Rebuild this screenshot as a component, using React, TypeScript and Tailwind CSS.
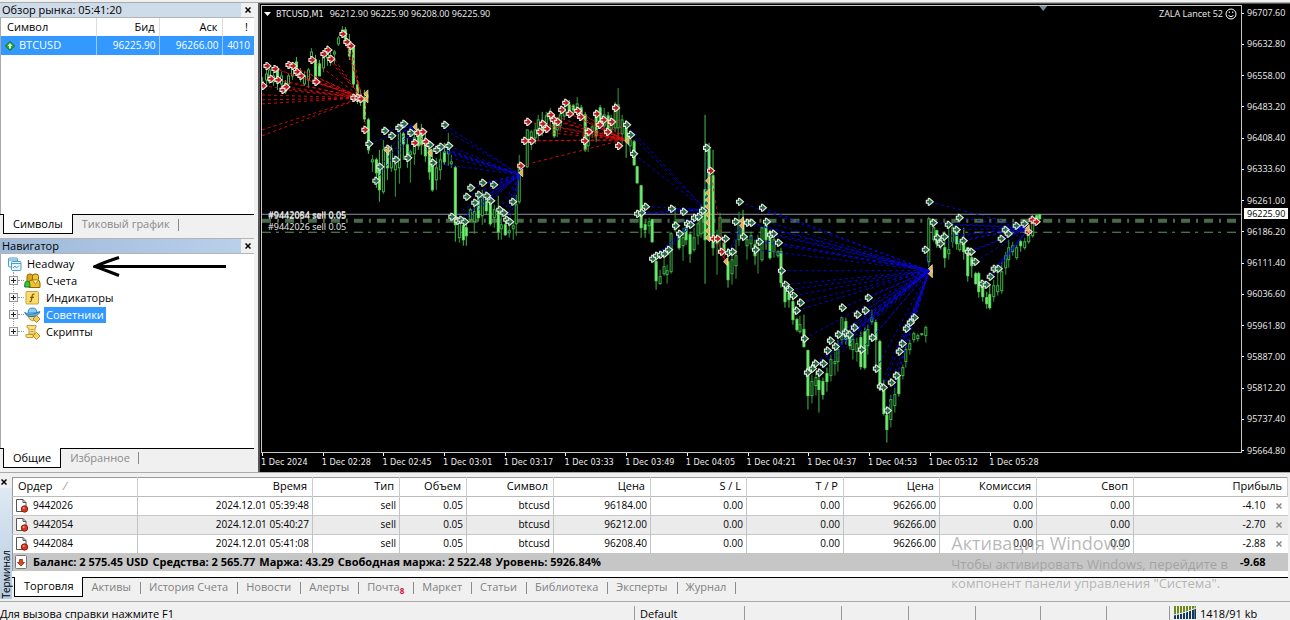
import { ReactNode } from "react"

type Candle = [number, number, number, number, number, 0 | 1] // x, high, low, top, bottom, filled
type Point = [number, number]
type Deals = { target: Point; color: "red" | "blue"; points: Point[]; extra?: Point[] }

const candles: Candle[] = [
  [262, 77, 90, 82, 88, 0], [266, 68, 86, 74, 80, 0], [269, 65, 84, 70, 82, 0], [273, 72, 86, 76, 82, 0],
  [277, 66, 90, 70, 82, 1], [281, 72, 88, 76, 84, 0], [285, 80, 94, 84, 92, 0], [288, 74, 88, 76, 84, 0],
  [292, 62, 80, 66, 76, 0], [296, 57, 76, 62, 70, 1], [300, 68, 82, 72, 78, 0], [304, 72, 86, 76, 84, 0],
  [308, 68, 88, 70, 80, 0], [311, 48, 62, 52, 60, 0], [315, 55, 84, 60, 78, 1], [319, 60, 76, 64, 76, 1],
  [323, 50, 72, 58, 68, 0], [327, 45, 66, 50, 58, 0], [330, 52, 66, 56, 62, 0], [334, 50, 64, 52, 54, 0],
  [338, 36, 46, 38, 44, 0], [342, 26, 38, 30, 36, 0], [345, 27, 46, 30, 42, 1], [349, 34, 60, 42, 56, 1],
  [353, 44, 88, 46, 84, 1], [357, 80, 104, 85, 97, 1], [360, 90, 106, 95, 101, 1], [364, 90, 122, 100, 119, 1],
  [368, 118, 154, 120, 150, 1], [372, 155, 172, 160, 162, 0], [376, 158, 188, 160, 173, 1], [379, 150, 202, 165, 190, 1],
  [383, 140, 194, 150, 192, 0], [387, 148, 180, 150, 168, 1], [391, 145, 172, 150, 168, 0], [395, 158, 197, 165, 170, 0],
  [399, 126, 184, 132, 168, 0], [403, 132, 160, 134, 144, 1], [407, 138, 168, 145, 155, 1], [410, 150, 183, 152, 155, 0],
  [414, 130, 165, 138, 154, 0], [418, 128, 150, 132, 146, 1], [421, 124, 155, 135, 145, 1], [425, 130, 162, 140, 156, 1],
  [429, 145, 180, 150, 172, 1], [432, 150, 192, 160, 190, 1], [436, 158, 190, 168, 180, 0], [440, 150, 180, 160, 170, 0],
  [444, 143, 165, 152, 162, 1], [448, 133, 166, 145, 154, 0], [451, 155, 168, 162, 164, 0], [455, 166, 242, 168, 225, 1],
  [459, 220, 243, 222, 238, 0], [463, 218, 246, 226, 240, 1], [466, 222, 246, 228, 236, 1], [470, 208, 222, 210, 220, 0],
  [474, 205, 234, 212, 222, 0], [478, 195, 222, 200, 218, 1], [482, 190, 225, 198, 216, 0], [486, 195, 215, 200, 211, 1],
  [490, 198, 226, 202, 224, 1], [494, 205, 228, 210, 218, 0], [498, 196, 240, 212, 232, 1], [501, 214, 240, 225, 229, 0],
  [505, 215, 236, 225, 235, 1], [509, 222, 238, 231, 233, 0], [513, 222, 240, 226, 229, 0], [516, 195, 236, 205, 224, 0],
  [519, 155, 204, 165, 202, 0], [527, 130, 168, 130, 167, 0], [531, 130, 150, 132, 140, 0], [535, 123, 144, 130, 138, 0],
  [538, 115, 140, 120, 134, 0], [542, 112, 136, 122, 132, 1], [546, 112, 130, 116, 126, 0], [550, 108, 128, 112, 120, 0],
  [554, 115, 138, 118, 136, 1], [557, 118, 137, 122, 130, 0], [560, 110, 130, 115, 126, 0], [564, 102, 120, 108, 116, 0],
  [569, 100, 116, 105, 112, 1], [573, 104, 114, 106, 110, 1], [577, 97, 114, 104, 110, 0], [581, 105, 118, 108, 114, 1],
  [585, 112, 152, 115, 150, 1], [588, 130, 152, 132, 146, 0], [592, 125, 138, 127, 132, 0], [596, 110, 142, 112, 136, 1],
  [600, 105, 128, 108, 122, 1], [604, 108, 132, 115, 126, 0], [608, 112, 130, 116, 128, 1], [611, 115, 135, 120, 130, 0],
  [615, 102, 132, 110, 128, 0], [618, 88, 138, 105, 128, 0], [622, 115, 144, 120, 134, 0], [626, 120, 158, 128, 140, 1],
  [630, 138, 152, 140, 146, 0], [634, 140, 166, 142, 165, 1], [637, 166, 184, 167, 183, 1], [641, 185, 238, 186, 228, 1],
  [645, 222, 238, 225, 230, 1], [649, 218, 234, 222, 226, 0], [652, 219, 243, 220, 242, 1], [656, 258, 290, 262, 281, 1],
  [660, 270, 285, 277, 284, 0], [664, 258, 276, 267, 274, 0], [667, 265, 284, 271, 275, 0], [671, 232, 274, 234, 272, 0],
  [675, 206, 232, 222, 230, 0], [679, 230, 250, 235, 248, 1], [683, 228, 261, 238, 246, 0], [686, 225, 245, 228, 240, 1],
  [690, 232, 263, 235, 254, 1], [694, 228, 252, 238, 250, 0], [698, 220, 245, 224, 236, 0], [701, 205, 238, 212, 234, 0],
  [705, 115, 284, 190, 240, 1], [709, 143, 240, 150, 238, 1], [713, 150, 256, 176, 248, 1], [717, 230, 275, 238, 244, 0],
  [720, 213, 250, 218, 240, 0], [724, 240, 252, 244, 250, 1], [728, 248, 288, 262, 280, 1], [732, 250, 285, 260, 274, 0],
  [736, 240, 279, 256, 266, 0], [739, 212, 246, 220, 240, 0], [743, 210, 240, 226, 236, 1], [747, 236, 260, 240, 246, 0],
  [751, 232, 250, 236, 244, 0], [755, 240, 265, 245, 256, 1], [758, 235, 274, 248, 250, 0], [762, 227, 262, 228, 260, 0],
  [766, 222, 250, 225, 240, 1], [770, 230, 260, 235, 258, 1], [774, 235, 258, 240, 252, 0], [778, 250, 258, 252, 256, 0],
  [781, 248, 288, 252, 283, 1], [785, 283, 308, 285, 302, 1], [789, 290, 308, 294, 300, 1], [793, 300, 325, 302, 320, 1],
  [797, 318, 332, 320, 330, 1], [800, 316, 334, 325, 332, 0], [804, 315, 348, 330, 347, 1], [808, 350, 410, 351, 396, 1],
  [812, 375, 404, 382, 396, 0], [816, 372, 396, 378, 386, 0], [819, 376, 413, 381, 390, 1], [823, 378, 400, 382, 395, 1],
  [827, 368, 392, 374, 382, 1], [831, 355, 382, 360, 376, 0], [835, 352, 376, 362, 364, 0], [838, 340, 372, 350, 362, 0],
  [842, 317, 345, 318, 340, 0], [846, 318, 345, 322, 340, 1], [850, 330, 350, 336, 346, 1], [853, 335, 360, 340, 350, 0],
  [857, 338, 362, 344, 352, 0], [861, 332, 370, 338, 367, 1], [865, 328, 370, 332, 368, 1], [868, 325, 355, 330, 346, 0],
  [872, 310, 325, 318, 322, 0], [876, 320, 365, 323, 340, 1], [880, 340, 390, 342, 388, 1], [884, 380, 416, 388, 414, 1],
  [887, 410, 443, 416, 430, 1], [891, 395, 428, 400, 420, 0], [895, 388, 413, 395, 406, 0], [899, 372, 397, 376, 394, 1],
  [903, 365, 380, 368, 376, 0], [906, 345, 368, 350, 362, 0], [910, 340, 355, 344, 350, 0], [914, 332, 343, 334, 340, 0],
  [918, 334, 342, 336, 339, 0], [922, 334, 336, 334, 335, 0], [926, 326, 343, 328, 336, 0], [929, 217, 267, 219, 262, 0],
  [934, 224, 242, 228, 240, 0], [937, 230, 248, 231, 244, 1], [941, 236, 250, 240, 246, 1], [945, 232, 268, 248, 258, 1],
  [949, 225, 260, 250, 254, 0], [953, 222, 248, 228, 242, 0], [957, 228, 250, 232, 244, 1], [960, 240, 252, 244, 250, 0],
  [964, 228, 260, 240, 252, 1], [968, 248, 282, 248, 276, 1], [972, 255, 278, 258, 266, 1], [976, 272, 285, 274, 284, 1],
  [979, 272, 298, 274, 292, 1], [983, 280, 302, 285, 297, 1], [987, 292, 309, 298, 304, 1], [990, 285, 310, 295, 308, 1],
  [994, 280, 302, 286, 297, 0], [998, 270, 296, 286, 292, 0], [1002, 262, 294, 272, 291, 0], [1006, 252, 275, 256, 268, 0],
  [1009, 240, 268, 248, 260, 0], [1013, 242, 256, 246, 252, 0], [1017, 245, 260, 248, 258, 0], [1021, 240, 252, 242, 246, 1],
  [1025, 238, 250, 242, 248, 0], [1029, 228, 244, 236, 242, 0], [1033, 214, 238, 220, 236, 0], [1037, 214, 225, 216, 222, 1],
  [1040, 214, 220, 215, 219, 1],
]

const deals: Deals[] = [
  {
    target: [362, 98],
    color: "red",
    points: [
      [263, 86], [267, 66], [275, 69], [271, 79], [278, 80], [283, 90], [286, 87], [289, 65], [293, 66], [297, 72],
      [301, 76], [312, 60], [316, 82], [324, 54], [328, 50], [331, 59], [343, 34], [347, 42], [351, 46],
      [354, 98], [358, 98], [361, 99],
    ],
    extra: [[262, 95], [262, 100], [262, 104], [262, 130], [262, 136]],
  },
  { target: [366, 98], color: "red", points: [[365, 130]] },
  { target: [428, 148], color: "red", points: [[415, 143], [418, 133], [423, 132], [426, 142]] },
  {
    target: [415, 127],
    color: "blue",
    points: [[369, 144], [376, 181], [380, 167], [385, 131], [392, 136], [388, 149], [399, 128], [404, 124], [396, 160], [408, 158], [411, 133]],
  },
  {
    target: [520, 175],
    color: "blue",
    points: [
      [445, 125], [430, 145], [433, 163], [437, 150], [441, 147], [449, 146], [452, 217], [458, 221], [461, 220],
      [465, 222], [467, 197], [471, 188], [475, 203], [479, 195], [483, 183], [487, 196], [491, 201], [494, 185],
      [500, 210], [504, 213], [507, 220], [510, 222], [513, 202],
    ],
    extra: [[446, 130], [448, 152], [450, 158]],
  },
  {
    target: [624, 140],
    color: "red",
    points: [
      [521, 166], [525, 141], [532, 141], [528, 122], [540, 132], [543, 124], [547, 129], [551, 115], [554, 120],
      [558, 122], [562, 110], [566, 103], [570, 114], [578, 111], [581, 117], [585, 141], [589, 132], [597, 114],
      [600, 125], [604, 120], [608, 132], [612, 122], [616, 108], [619, 146],
    ],
  },
  {
    target: [706, 210],
    color: "blue",
    points: [
      [627, 125], [631, 135], [634, 154], [638, 214], [642, 213], [646, 207], [653, 259], [657, 256], [661, 255],
      [665, 254], [669, 250], [672, 209], [676, 226], [680, 234], [684, 212], [688, 224], [691, 225], [695, 218],
      [699, 217], [703, 211], [707, 148],
    ],
  },
  { target: [726, 262], color: "red", points: [[711, 171], [714, 239], [718, 239], [722, 252]] },
  { target: [742, 224], color: "blue", points: [[726, 239], [729, 253], [733, 252], [736, 222]] },
  {
    target: [930, 271],
    color: "blue",
    points: [
      [740, 202], [744, 237], [748, 223], [752, 223], [756, 250], [760, 242], [763, 208], [767, 222], [771, 235],
      [774, 234], [779, 243], [782, 271], [786, 285], [790, 290], [794, 296], [797, 311], [801, 303], [805, 339],
      [808, 373], [813, 369], [816, 364], [820, 373], [824, 364], [828, 351], [831, 341], [836, 347], [839, 335],
      [843, 308], [846, 333], [850, 335], [855, 328], [858, 315], [862, 350], [866, 311], [869, 298], [873, 338],
      [877, 369], [881, 387], [884, 388], [888, 411], [892, 383], [897, 376], [900, 352], [903, 344], [907, 329],
      [911, 323], [915, 318], [926, 250],
    ],
  },
  {
    target: [1030, 228],
    color: "blue",
    points: [
      [930, 202], [934, 223], [938, 238], [941, 244], [945, 237], [949, 225], [957, 230], [960, 218], [964, 241],
      [969, 252], [972, 252], [976, 262], [983, 284], [987, 285], [991, 277], [995, 269], [999, 269], [1002, 239],
      [1006, 230], [1009, 234], [1017, 226], [1025, 224],
    ],
  },
  { target: [1033, 224], color: "red", points: [[1029, 232], [1033, 220], [1037, 222]] },
]

const closes: Point[] = [
  [366, 94], [366, 99], [415, 127], [387, 151], [430, 153], [521, 173], [627, 141], [708, 181], [708, 193], [708, 200],
  [708, 207], [708, 215], [708, 223], [708, 231], [708, 238], [726, 262], [742, 221], [742, 226], [931, 269], [931, 274],
  [1028, 229],
]

const prices = [
  "96707.60", "96632.80", "96558.00", "96483.20", "96408.40", "96333.60", "96261.00", "96186.20",
  "96111.40", "96036.60", "95961.80", "95887.00", "95812.20", "95737.40", "95664.80",
]

const times = ["2024", "02:28", "02:45", "03:01", "03:17", "03:33", "03:49", "04:05", "04:21", "04:37", "04:53", "05:12", "05:28"]

const columns = [
  { title: "Ордер", width: "w-[125px]" },
  { title: "Время", width: "w-[175px]" },
  { title: "Тип", width: "w-[87px]" },
  { title: "Объем", width: "w-[67px]" },
  { title: "Символ", width: "w-[87px]" },
  { title: "Цена", width: "w-[97px]" },
  { title: "S / L", width: "w-[96px]" },
  { title: "T / P", width: "w-[97px]" },
  { title: "Цена", width: "w-[96px]" },
  { title: "Комиссия", width: "w-[97px]" },
  { title: "Своп", width: "w-[97px]" },
  { title: "Прибыль", width: "w-auto" },
]

const orders = [
  { id: "9442026", time: "2024.12.01 05:39:48", open: "96184.00", profit: "-4.10" },
  { id: "9442054", time: "2024.12.01 05:40:27", open: "96212.00", profit: "-2.70" },
  { id: "9442084", time: "2024.12.01 05:41:08", open: "96208.40", profit: "-2.88" },
]

const account = ["Баланс: 2 575.45 USD", "Средства: 2 565.77", "Маржа: 43.29", "Свободная маржа: 2 522.48", "Уровень: 5926.84%"]

const terminalTabs = ["Активы", "История Счета", "Новости", "Алерты", "Почта", "Маркет", "Статьи", "Библиотека", "Эксперты", "Журнал"]

const CloseMark = () => (
  <svg viewBox="0 0 6 6" className="size-1.5" stroke="currentColor" strokeWidth="1.5">
    <path d="M.5 .5 5.5 5.5M5.5 .5 .5 5.5" />
  </svg>
)

const PanelTitle = ({ title, tone }: { title: string; tone: string }) => (
  <div className="flex h-[15px] border-b border-[#b4b4b4]">
    <h2 className={`flex-1 truncate pl-0.5 text-[11px] leading-[14px] ${tone}`}>{title}</h2>
    <button aria-label="Закрыть" className="flex w-[13px] items-center justify-center">
      <CloseMark />
    </button>
  </div>
)

const PanelTabs = ({ active, other }: { active: string; other: string }) => (
  <div className="flex h-6 border-t border-black pl-[3px] text-[11px]">
    <button className="-mt-px h-5 border-x border-b border-black bg-white px-[9px] leading-[19px]">{active}</button>
    <button className="flex h-[19px] items-center pl-[9px] text-[#8a8a8a]">
      {other}
      <span className="ml-2 h-3 w-px bg-[#8a8a8a]" />
    </button>
  </div>
)

const TreeRow = ({ label, selected, icon }: { label: string; selected?: boolean; icon: ReactNode }) => (
  <li className="flex h-[17px] items-center">
    <button aria-label={`Развернуть ${label}`} className="relative flex size-[9px] items-center justify-center border border-[#999] bg-[#f4f4f4]">
      <svg viewBox="0 0 5 5" className="size-[5px]" stroke="#222">
        <path d="M0 2.5H5M2.5 0V5" />
      </svg>
    </button>
    <span className="w-1.5 border-t border-dotted border-[#999]" />
    {icon}
    <span className={`ml-[3px] h-4 px-0.5 leading-4 ${selected ? "bg-[#3399ff] text-white" : ""}`}>{label}</span>
  </li>
)

const AccountsIcon = () => (
  <svg viewBox="0 0 17 16" className="h-4 w-[17px]">
    <rect x="3" y="1" width="6" height="9" rx="2.5" fill="#d9a51c" stroke="#8f6508" />
    <rect x="8.500" y="1" width="6" height="8" rx="2.5" fill="#efc531" stroke="#8f6508" />
    <path d="M5 14.500V9.500q0-2.500 3-2.500h5q3 0 3 3v4.500z" fill="#efc12c" stroke="#8f6508" />
    <path d="M9 7.500l2.500 4L14 7.500" fill="#fff3b0" stroke="#b98a18" />
    <path d="M.7 14v-2q0-4 2.500-4t2.800 4v2z" fill="#3fc23c" stroke="#14801c" />
  </svg>
)

const IndicatorsIcon = () => (
  <svg viewBox="0 0 17 16" className="h-4 w-[17px]">
    <rect x="2" y="1.500" width="12.500" height="12.500" rx="1" fill="#f8dd6d" stroke="#c9a236" />
    <path d="M10.500 4.300Q8.800 3.500 8.300 5.500L7.300 10.500Q6.900 12 5.500 11.500M6 7.300H10" fill="none" stroke="#8a5c08" strokeWidth="1.300" />
  </svg>
)

const ExpertsIcon = () => (
  <svg viewBox="0 0 17 16" className="h-4 w-[17px]">
    <path d="M4 9Q5 13 9 14l3-4z" fill="#f3d98a" stroke="#c39a2e" />
    <path d="M4 6Q4 1 8.500 1T13 6z" fill="#8fcdf2" stroke="#2f86bd" />
    <path d="M.7 5.500Q4 8 8.500 7T15.800 4.500Q15 8.500 9 9.500T.7 5.500z" fill="#5fb2e4" stroke="#2576ab" />
    <path d="M12.500 8.500 16 12l-3.500 3.500L9 12z" fill="#f6c95b" stroke="#c08420" />
  </svg>
)

const ScriptsIcon = () => (
  <svg viewBox="0 0 17 16" className="h-4 w-[17px]">
    <path d="M3 1.500H12Q13 3.500 11 4V10H5V4.500Q2 4 3 1.500z" fill="#f7e08a" stroke="#c2992f" />
    <path d="M2 10.500H9V13.500H3Q1 13 2 10.500z" fill="#f7e08a" stroke="#c2992f" />
    <path d="M6.500 5.500h3M6.500 7.500h3" stroke="#c2992f" />
    <path d="M12.500 8.500 16 12l-3.500 3.500L9 12z" fill="#f6d65b" stroke="#c08f20" />
  </svg>
)

const TerminalIcon = () => (
  <svg viewBox="0 0 15 14" className="h-3.5 w-[15px]" fill="#eaf6fd" stroke="#4f9fce">
    <rect x="1.500" y="1" width="9" height="9" rx="1" />
    <path d="M1.500 3h9" />
    <rect x="4.500" y="4.500" width="9.500" height="9" rx="1" />
    <path d="M4.500 6.500H14M6 11l2-2 1.500 2L12 8.500" />
  </svg>
)

const OrderIcon = () => (
  <svg viewBox="0 0 14 14" className="h-3.5 w-3.5">
    <path d="M1.500 .500H8L11 3.500V12.500H1.500z" fill="#fff" stroke="#555" />
    <path d="M8 .500V3.500H11" fill="none" stroke="#555" />
    <circle cx="9.500" cy="10" r="3.200" fill="#d23a22" stroke="#8f1a0a" />
    <circle cx="8.700" cy="9" r="1" fill="#f09a80" />
  </svg>
)

const MarketWatch = () => (
  <section className="flex h-[235px] flex-col">
    <PanelTitle title="Обзор рынка: 05:41:20" tone="bg-[#cedbe9]" />
    <div className="flex-1 border-l border-[#aaa] bg-white">
      <table className="w-full table-fixed text-[11px]">
        <thead>
          <tr className="h-[18px] text-right">
            <th className="w-[95px] border-r border-[#ddd] pl-1.5 text-left font-normal">Символ</th>
            <th className="w-[63px] border-r border-[#ddd] pr-1 font-normal">Бид</th>
            <th className="w-[63px] border-r border-[#ddd] pr-1 font-normal">Аск</th>
            <th className="pr-1.5 font-normal">!</th>
          </tr>
        </thead>
        <tbody>
          <tr className="h-[19px] bg-[#3399ff] text-right text-[10px] text-white">
            <td className="border-r border-[#9bcbfa] pl-1 text-left">
              <span className="flex items-center gap-1">
                <svg viewBox="0 0 10 10" className="size-2.5">
                  <path d="M5 .500 9.500 5 5 9.500 .500 5z" fill="#2faa2f" stroke="#0f6e1a" />
                  <path d="M5 2 7.500 5H6V7.500H4V5H2.500z" fill="#d8ffd0" />
                </svg>
                <span className="text-[11px]">BTCUSD</span>
              </span>
            </td>
            <td className="border-r border-[#9bcbfa] pr-[3px]">96225.90</td>
            <td className="border-r border-[#9bcbfa] pr-[3px]">96266.00</td>
            <td className="pr-1">4010</td>
          </tr>
        </tbody>
      </table>
    </div>
    <PanelTabs active="Символы" other="Тиковый график" />
  </section>
)

const Navigator = () => (
  <section className="flex flex-1 flex-col border-t border-[#b4b4b4]">
    <PanelTitle title="Навигатор" tone="bg-linear-to-r from-[#9db9d8] to-[#b9d0ea]" />
    <div className="relative flex-1 border-l border-[#aaa] bg-white pt-0.5 text-[11px]">
      <div className="flex h-4 items-center gap-[5px] pl-1.5">
        <TerminalIcon />
        Headway
      </div>
      <div className="relative ml-2">
        <span className="absolute bottom-2 left-1 top-0 border-l border-dotted border-[#999]" />
        <ul>
          <TreeRow label="Счета" icon={<AccountsIcon />} />
          <TreeRow label="Индикаторы" icon={<IndicatorsIcon />} />
          <TreeRow label="Советники" icon={<ExpertsIcon />} selected />
          <TreeRow label="Скрипты" icon={<ScriptsIcon />} />
        </ul>
      </div>
      <svg viewBox="0 0 134 22" className="absolute left-[92px] top-0.5 h-[22px] w-[134px]" fill="none" stroke="#000" strokeWidth="3">
        <path d="M1 10.500H133M26 1.500 Q12 6 2 10.500 Q12 14 26 19.500" />
      </svg>
    </div>
    <PanelTabs active="Общие" other="Избранное" />
  </section>
)

// order marker: small arrow pointing right in a white outline
const Marker = ({ at: [x, y], fill }: { at: Point; fill: string }) => (
  <path d={`M${x - 3} ${y - 1.5}h2v-2h1l4 3.500-4 3.500h-1v-2h-2z`} fill={fill} stroke="#e8ebdf" strokeWidth="1.100" />
)

const Plot = () => (
  <svg viewBox="262 6 980 446" preserveAspectRatio="none" className="absolute inset-0 h-full w-full">
    <path d="M262 214.500H1242" stroke="#8d959f" />
    <path d="M262 221H1242" stroke="#466b49" strokeWidth="4" strokeDasharray="9 6 2 6" />
    <path d="M262 232.500H1242" stroke="#5f9a62" strokeDasharray="9 5 3 6" />
    {candles.map(([x, high, low, top, bottom, filled]) => (
      <g key={x} stroke={filled ? "#46c24c" : "#2f9e38"}>
        <path d={`M${x + 0.5} ${high}V${low}`} />
        <rect
          x={x - 0.5}
          y={top}
          width="2"
          height={Math.max(bottom - top, 1)}
          fill={filled ? "#7cf27c" : "#000"}
          stroke={filled ? "#5cdc5f" : "#3fb548"}
        />
      </g>
    ))}
    {deals.map(({ target, color, points, extra = [] }) => (
      <g key={target.join()} stroke={color === "red" ? "#f01010" : "#0808f0"} strokeDasharray="3 3" opacity="0.85">
        {[...points, ...extra].map(([x, y], i) => (
          <path key={i} d={`M${x} ${y}L${target.join(" ")}`} />
        ))}
      </g>
    ))}
    {deals.map(({ target, color, points }) =>
      points.map((p) => <Marker key={target.join() + p.join()} at={p} fill={color === "red" ? "#c4161c" : "#1d6b45"} />)
    )}
    {closes.map(([x, y]) => (
      <path key={`${x}-${y}`} d={`M${x + 2} ${y - 4}v8l-4-4z`} fill="#e8b04a" stroke="#f3dfae" strokeWidth="0.800" />
    ))}
    <path d="M1040 6h8l-4 5z" fill="#7d8794" />
  </svg>
)

const Chart = () => (
  <main className="flex flex-1 flex-col border-l-2 border-t border-[#555] bg-black text-[9px] leading-3 text-[#eee]">
    <div className="flex flex-1 pt-px pl-px">
      <div className="relative flex-1 border border-[#c8c8c8]">
        <Plot />
        <div className="absolute left-0.5 top-0.5 flex items-center">
          <svg viewBox="0 0 7 4" className="mr-[5px] h-1 w-[7px]">
            <path d="M0 0h7L3.500 4z" fill="#fff" />
          </svg>
          <span className="mr-1.5 font-['DejaVu_Sans_Condensed',sans-serif]">BTCUSD,M1</span>
          <span>96212.90 96225.90 96208.00 96225.90</span>
        </div>
        <div className="absolute right-1 top-0.5 flex items-center gap-0.5">
          ZALA Lancet 52
          <svg viewBox="0 0 12 12" className="size-3" fill="none" stroke="#fff">
            <circle cx="6" cy="6" r="5" />
            <path d="M3.500 7.500Q6 10 8.500 7.500M4.300 3.500v1.500M7.700 3.500v1.500" />
          </svg>
        </div>
        <span className="absolute left-1.5 top-[203px]">#9442084 sell 0.05</span>
        <span className="absolute left-1.5 top-[204px]">#9442054 sell 0.05</span>
        <span className="absolute left-1.5 top-[215px]">#9442026 sell 0.05</span>
      </div>
      <div className="relative -mb-1 flex w-12 flex-col justify-between pt-0.5">
        {prices.map((price) => (
          <div key={price} className="flex items-center gap-[3px]">
            <span className="h-px w-0.5 bg-white" />
            {price}
          </div>
        ))}
        <div className="absolute left-0.5 top-[203px] h-[11px] bg-white px-[3px] leading-[11px] text-black">96225.90</div>
      </div>
    </div>
    <div className="mr-[240px] grid h-[19px] grid-cols-13 pl-px font-['DejaVu_Sans_Condensed',sans-serif]">
      {times.map((time) => (
        <div key={time} className="whitespace-nowrap">
          <span className="ml-px block h-[3px] w-px bg-white" />
          1 Dec {time}
        </div>
      ))}
    </div>
  </main>
)

const Terminal = () => (
  <section className="relative flex border-t border-[#aaa] bg-[#f0f0f0]">
    <div className="flex w-3 flex-col pt-[3px]">
      <button aria-label="Закрыть" className="flex h-3 items-center pl-px">
        <CloseMark />
      </button>
      <div className="mb-0.5 flex w-full flex-1 items-center bg-linear-to-b from-[#dfe9f3] to-[#b5cbe2] text-[10px] leading-3 [writing-mode:vertical-rl]">
        <span className="ml-auto mt-auto rotate-180">Терминал</span>
      </div>
    </div>
    <div className="flex-1 pr-0.5 pt-1">
      <table className="w-full table-fixed border-l border-t border-[#999] bg-white text-[10px]">
        <thead>
          <tr className="h-[19px] border-b border-[#bbb] text-right text-[11px]">
            {columns.map(({ title, width }, i) => (
              <th key={i} className={`${width} border-r border-[#ccc] pr-[5px] font-normal first:pl-[5px] first:text-left`}>
                {title}
                {i === 0 && <span className="ml-3 text-[#888]">⁄</span>}
              </th>
            ))}
          </tr>
        </thead>
        <tbody>
          {orders.map(({ id, time, open, profit }) => (
            <tr key={id} className="h-[19px] border-b border-[#c8c8c8] text-right even:bg-[#ebebeb] last:border-b-0">
              <td className="border-r border-[#c0c4c8] pl-0.5">
                <span className="flex items-center gap-1">
                  <OrderIcon />
                  {id}
                </span>
              </td>
              {[time, "sell", "0.05", "btcusd", open, "0.00", "0.00", "96266.00", "0.00", "0.00"].map((cell, i) => (
                <td key={i} className="border-r border-[#c0c4c8] pr-[3px]">
                  {cell}
                </td>
              ))}
              <td>
                <span className="flex items-center justify-end gap-2.5 pr-1.5">
                  {profit}
                  <button aria-label={`Закрыть ордер ${id}`} className="text-[#888]">
                    <CloseMark />
                  </button>
                </span>
              </td>
            </tr>
          ))}
        </tbody>
        <tfoot>
          <tr className="h-[18px] bg-[#c6c6c6] text-[11px] font-bold">
            <td colSpan={11} className="pl-0.5">
              <span className="flex items-center gap-1.5">
                <svg viewBox="0 0 12 14" className="h-3.5 w-3">
                  <rect x=".500" y=".500" width="11" height="13" rx="1" fill="#fff" stroke="#777" />
                  <path d="M6 11 2.500 7.500H4.500V4.500h3v3h2z" fill="#e04a1c" stroke="#93260a" strokeWidth=".800" />
                </svg>
                <span className="flex gap-1">
                  {account.map((item) => (
                    <span key={item}>{item}</span>
                  ))}
                </span>
              </span>
            </td>
            <td className="pr-[22px] text-right">-9.68</td>
          </tr>
        </tfoot>
      </table>
      <div className="h-1.5 bg-white" />
      <nav className="flex h-6 border-t border-black pl-0.5 text-[11px] text-[#808080]">
        <button className="-mt-px h-5 border-x border-b border-black bg-white px-[9px] text-black">Торговля</button>
        {terminalTabs.map((tab) => (
          <button key={tab} className="flex h-[19px] items-center pl-2">
            {tab}
            {tab === "Почта" && <span className="mt-1.5 text-[8px] font-bold text-[#d0103a]">8</span>}
            <span className="ml-[9px] h-3 w-px bg-[#8a8a8a]" />
          </button>
        ))}
      </nav>
    </div>
    <div className="pointer-events-none absolute right-[62px] top-[59px] text-[13px] leading-[19px] text-[#8a8a8a]/60">
      <p className="text-lg leading-[23px]">Активация Windows</p>
      <p>Чтобы активировать Windows, перейдите в</p>
      <p>компонент панели управления "Система".</p>
    </div>
  </section>
)

const StatusBar = () => (
  <footer className="flex h-[19px] border-t border-[#aaa] pt-1 text-[11px] leading-[15px]">
    <span className="flex-1 whitespace-nowrap">Для вызова справки нажмите F1</span>
    <span className="w-[110px] border-l border-[#999] pl-[5px]">Default</span>
    <span className="w-[97px] border-l border-[#999]" />
    <span className="w-[67px] border-l border-[#999]" />
    <span className="w-[67px] border-l border-[#999]" />
    <span className="w-[65px] border-l border-[#999]" />
    <span className="w-[66px] border-l border-[#999]" />
    <span className="w-[63px] border-l border-[#999]" />
    <span className="flex w-[121px] gap-1 border-l border-[#999] pl-1">
      <svg viewBox="0 0 22 13" className="h-[13px] w-[22px]">
        <path d="M1 0V13M4 0V13M7 0V13M10 0V13M13 0V13M16 0V13M19 0V13M21.500 0V13" stroke="#6d8a1e" strokeWidth="2" />
        <path d="M1 9V13M4 9V13M7 8V13M10 7V13M13 6V13M16 5V13M19 4V13M21.500 3V13" stroke="#123a60" strokeWidth="2" />
        <path d="M0 9Q12 7 22 2" fill="none" stroke="#f0f0f0" />
      </svg>
      1418/91 kb
    </span>
  </footer>
)

export default function App() {
  return (
    <div className="flex min-h-screen flex-col bg-[#f0f0f0] font-['Open_Sans','Noto_Sans',sans-serif] text-black">
      <div className="h-[3px] border-b border-[#aaa]" />
      <div className="flex flex-1">
        <aside className="flex w-[258px] flex-col pr-1">
          <MarketWatch />
          <Navigator />
        </aside>
        <Chart />
      </div>
      <Terminal />
      <StatusBar />
    </div>
  )
}
